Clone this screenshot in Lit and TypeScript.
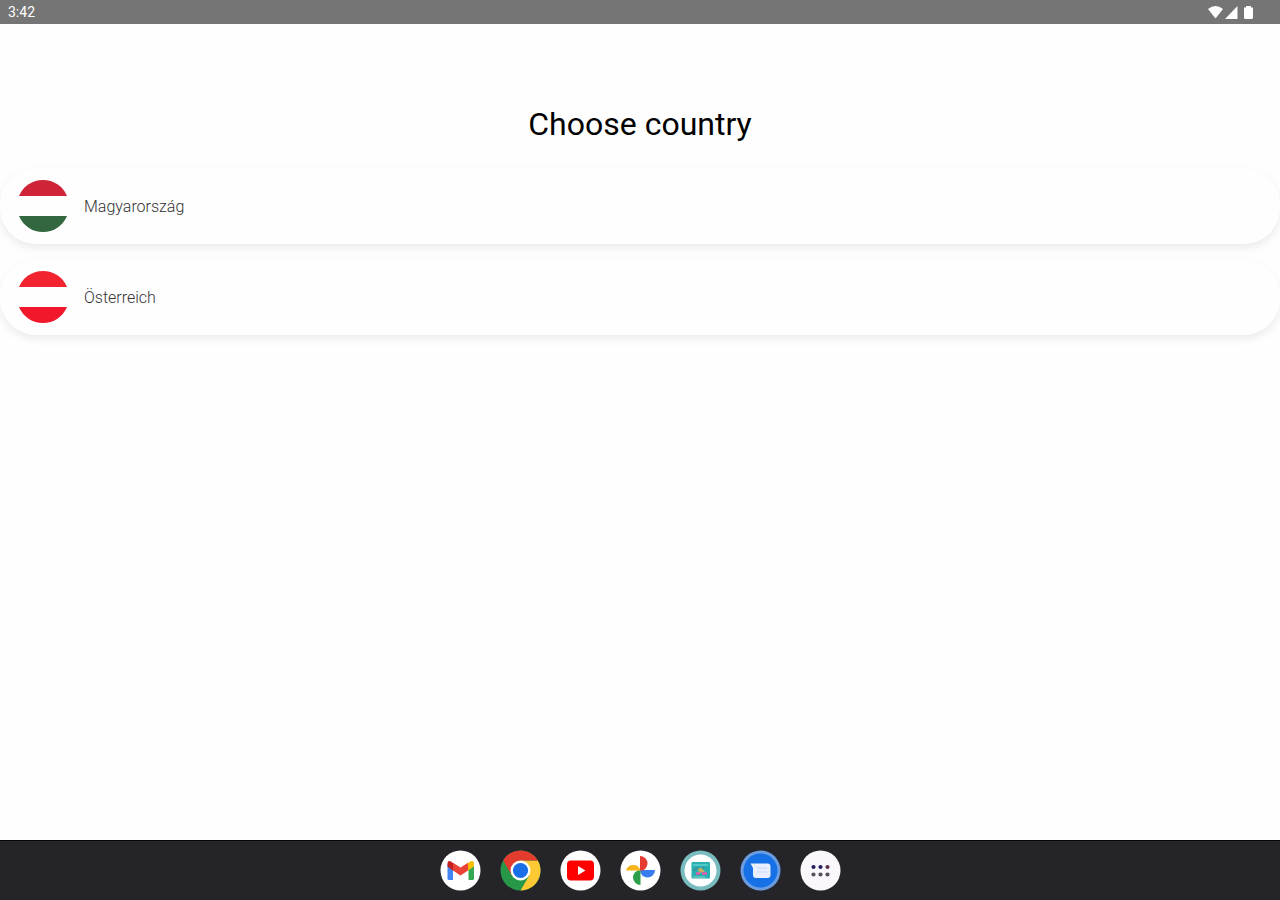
import { LitElement, html, css, svg } from "lit";
import { customElement } from "lit/decorators.js";

const countries = [
  { name: "Magyarország", top: "#cf2338", bottom: "#32673f" },
  { name: "Österreich", top: "#f0232f", bottom: "#f0182a" },
];

const apps = [
  {
    name: "Gmail",
    art: svg`
      <circle cx="20.500" cy="20.500" r="20" fill="#fff"/>
      <path d="M7.500 14V28.500Q7.500 30 9 30H13V18z" fill="#4285f4"/>
      <path d="M34 14V28.500Q34 30 32.500 30H28.500V18z" fill="#34a853"/>
      <path d="M27.500 13.500L30 11.500Q34 9.500 34 14V16.500L27.500 21z" fill="#fbbc04"/>
      <path d="M7.500 16.500V14Q7.500 9.500 11 11.500L13.500 13.500V21z" fill="#c5221f"/>
      <path d="M13 12.800L20.500 17.500L28 12.800V20.500L20.500 25.500L13 20.500z" fill="#ea4335"/>`,
  },
  {
    name: "Chrome",
    art: svg`
      <circle cx="20.500" cy="20.500" r="20" fill="#279847"/>
      <path d="M20.500 10.500H37.800A20 20 0 0 1 20.500 40.500L29.200 25.500z" fill="#fcc934"/>
      <path d="M3.200 10.500A20 20 0 0 1 37.800 10.500H20.500L11.800 25.500z" fill="#e33b2e"/>
      <circle cx="20.500" cy="20.500" r="10" fill="#fff"/>
      <circle cx="20.500" cy="20.500" r="7.600" fill="#1a6fe8"/>`,
  },
  {
    name: "YouTube",
    art: svg`
      <circle cx="20.500" cy="20.500" r="20" fill="#fff"/>
      <rect x="7" y="10.500" width="27" height="20" rx="4" fill="#fe0000"/>
      <path d="M18 16L25.500 20.500L18 25z" fill="#fff"/>`,
  },
  {
    name: "Photos",
    art: svg`
      <circle cx="20.500" cy="20.500" r="20" fill="#fff"/>
      <path d="M20 6A7.500 7.500 0 0 1 20 21z" fill="#e53b30"/>
      <path d="M35 20A7.500 7.500 0 0 1 20 20z" fill="#397cf0"/>
      <path d="M20.500 35A7.500 7.500 0 0 1 20.500 20z" fill="#2b9f49"/>
      <path d="M6 20.500A7.500 7.500 0 0 1 20.500 20.500z" fill="#f6b51a"/>
      <path d="M20.500 13V20.500H24z" fill="#e53b30"/>`,
  },
  {
    name: "Calendar",
    art: svg`
      <circle cx="20.500" cy="20.500" r="20" fill="#78bcbf"/>
      <circle cx="20.500" cy="20.500" r="16" fill="#fff"/>
      <rect x="11.500" y="12" width="18.500" height="16.500" rx="1" fill="#28afb2"/>
      <path d="M13 15H28" stroke="#62d0d0" stroke-width="1.500"/>
      <path d="M13 21L17 18L20 20.500L24 17" fill="none" stroke="#3f8f98" stroke-width="1.500"/>
      <path d="M17.500 19.500L21 17.500L25 21.500L20 23z" fill="#c5ae5e"/>
      <path d="M16 23.500H20M22 23.500H27" stroke="#e05bab" stroke-width="2.500"/>
      <path d="M13 27H25" stroke="#6dcbbd" stroke-width="1.500"/>`,
  },
  {
    name: "Messages",
    art: svg`
      <circle cx="20.500" cy="20.500" r="20" fill="#6b9ce0"/>
      <circle cx="20.500" cy="20.500" r="17" fill="#1670e6"/>
      <path d="M10.500 13.500H27.500Q30.500 13.500 30.500 16.500V25Q30.500 28 27.500 28H16Q13 28 13 25V18z" fill="#e9effe"/>
      <path d="M17 18H27M17 22H27" stroke="#d3e1fc" stroke-width="1.500"/>`,
  },
  {
    name: "All apps",
    art: svg`
      <circle cx="20.500" cy="20.500" r="20" fill="#faf8fd"/>
      <g fill="#24205f"><circle cx="13.500" cy="17" r="2.100"/><circle cx="20.500" cy="17" r="2.100"/></g>
      <circle cx="27.500" cy="17" r="2.100" fill="#5b3048"/>
      <g fill="#55525f"><circle cx="13.500" cy="24.500" r="2.100"/><circle cx="20.500" cy="24.500" r="2.100"/><circle cx="27.500" cy="24.500" r="2.100"/></g>`,
  },
];

@customElement("app-root")
export class AppRoot extends LitElement {
  static styles = css`
    :host {
      display: flex;
      flex-direction: column;
      min-height: 100vh;
      background: #fefefe;
      color: #000;
      font-family: Roboto, "Liberation Sans", sans-serif;
    }
    .status {
      display: flex;
      align-items: center;
      justify-content: space-between;
      height: 24px;
      padding: 0 24px 0 8px;
      background: #757575;
      color: #fff;
      font-size: 14px;
    }
    .signals {
      display: block;
    }
    main {
      flex: 1;
      padding-top: 80px;
    }
    h1 {
      margin: 0;
      font-size: 32px;
      line-height: 40px;
      font-weight: 400;
      text-align: center;
    }
    .list {
      display: flex;
      flex-direction: column;
      gap: 15px;
      margin: 24px 0 0;
      padding: 0;
      list-style: none;
    }
    .card {
      display: flex;
      align-items: center;
      gap: 16px;
      width: 100%;
      padding: 12px 16px;
      border: 0;
      border-radius: 36px;
      background: #fefefe;
      box-shadow: 0 4px 8px rgba(0, 0, 0, 0.08);
      color: #333;
      font: inherit;
      font-size: 16px;
      font-weight: 300;
      text-align: left;
      cursor: pointer;
    }
    .flag {
      display: block;
      width: 52px;
      height: 52px;
    }
    .dock {
      display: flex;
      align-items: center;
      justify-content: center;
      gap: 19px;
      height: 60px;
      background: #252529;
      box-shadow: inset 0 1px #08080a;
    }
    .app {
      width: 41px;
      height: 41px;
      padding: 0;
      border: 0;
      border-radius: 50%;
      background: none;
      cursor: pointer;
    }
    .app svg {
      display: block;
    }
  `;

  render() {
    return html`
      <header class="status">
        <time>3:42</time>
        <svg class="signals" width="48" height="16" viewBox="0 0 48 16" fill="#fff" role="img" aria-label="Wi-Fi, signal and battery">
          <path d="M0 5Q7.500-1 15 5L7.500 14.500z" />
          <path d="M29.500 2V15H17z" />
          <path d="M38 2H43V3.500H45V13.500Q45 15 43.500 15H37.500Q36 15 36 13.500V3.500H38z" />
        </svg>
      </header>
      <main>
        <h1>Choose country</h1>
        <ul class="list">
          ${countries.map(
            (c) => html`<li>
              <button class="card" type="button">
                <svg class="flag" viewBox="0 0 52 52" aria-hidden="true">
                  <path d="M3 16A26 26 0 0 1 51 16z" fill=${c.top} />
                  <path d="M3 36A26 26 0 0 0 51 36z" fill=${c.bottom} />
                </svg>
                <span>${c.name}</span>
              </button>
            </li>`
          )}
        </ul>
      </main>
      <nav class="dock" aria-label="Apps">
        ${apps.map(
          (a) => html`<button class="app" type="button" aria-label=${a.name}>
            <svg width="41" height="41" viewBox="0 0 41 41">${a.art}</svg>
          </button>`
        )}
      </nav>
    `;
  }
}
